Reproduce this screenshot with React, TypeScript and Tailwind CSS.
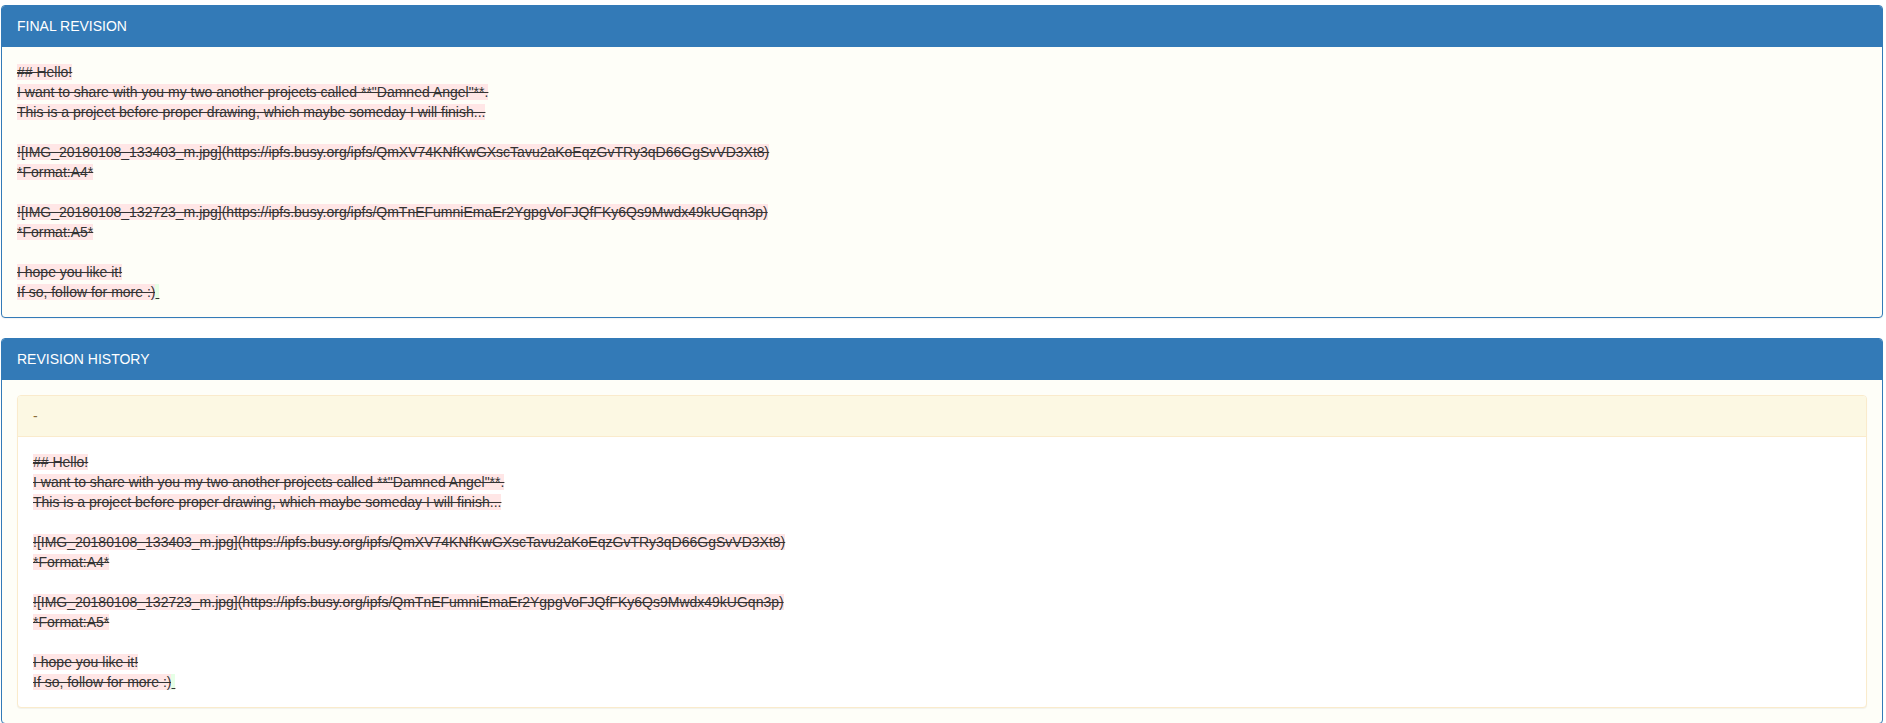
import React from "react";

const LINES: string[] = [
  "## Hello!",
  'I want to share with you my two another projects called **"Damned Angel"**.',
  "This is a project before proper drawing, which maybe someday I will finish...",
  "",
  "![IMG_20180108_133403_m.jpg](https://ipfs.busy.org/ipfs/QmXV74KNfKwGXscTavu2aKoEqzGvTRy3qD66GgSvVD3Xt8)",
  "*Format:A4*",
  "",
  "![IMG_20180108_132723_m.jpg](https://ipfs.busy.org/ipfs/QmTnEFumniEmaEr2YgpgVoFJQfFKy6Qs9Mwdx49kUGqn3p)",
  "*Format:A5*",
  "",
  "I hope you like it!",
  "If so, follow for more :)",
];

function Diff() {
  return (
    <div className="text-[14px] leading-[20px] text-[#333]">
      {LINES.map((line, i) => (
        <div key={i} className="h-[20px]">
          {line && (
            <del className="bg-[#ffe6e6] line-through decoration-[#333]">
              {line}
            </del>
          )}
          {i === LINES.length - 1 && (
            <ins className="bg-[#e6ffe6] underline decoration-[#333]">
              {"\u00a0"}
            </ins>
          )}
        </div>
      ))}
    </div>
  );
}

function Panel({
  title,
  children,
  className = "",
}: {
  title: string;
  children: React.ReactNode;
  className?: string;
}) {
  return (
    <div
      className={
        "rounded-[4px] border border-[#337ab7] bg-[#fefef8] shadow-[0_1px_1px_rgba(0,0,0,0.05)] " +
        className
      }
    >
      <div className="rounded-t-[3px] border-b border-[#337ab7] bg-[#337ab7] px-[15px] py-[10px] text-[14px] leading-[20px] text-white">
        {title}
      </div>
      <div className="p-[15px]">{children}</div>
    </div>
  );
}

export default function App() {
  return (
    <div
      className="min-h-screen bg-white pt-[5px] pl-px pr-[3px]"
      style={{ fontFamily: '"Liberation Sans", Arial, Helvetica, sans-serif' }}
    >
      <Panel title="FINAL REVISION" className="mb-[20px]">
        <Diff />
      </Panel>
      <Panel title="REVISION HISTORY">
        <div className="rounded-[4px] border border-[#faebcc] bg-white shadow-[0_1px_1px_rgba(0,0,0,0.05)]">
          <div className="rounded-t-[3px] border-b border-[#faebcc] bg-[#fcf8e3] px-[15px] py-[10px] text-[14px] leading-[20px] text-[#8a6d3b]">
            -
          </div>
          <div className="p-[15px]">
            <Diff />
          </div>
        </div>
      </Panel>
    </div>
  );
}
